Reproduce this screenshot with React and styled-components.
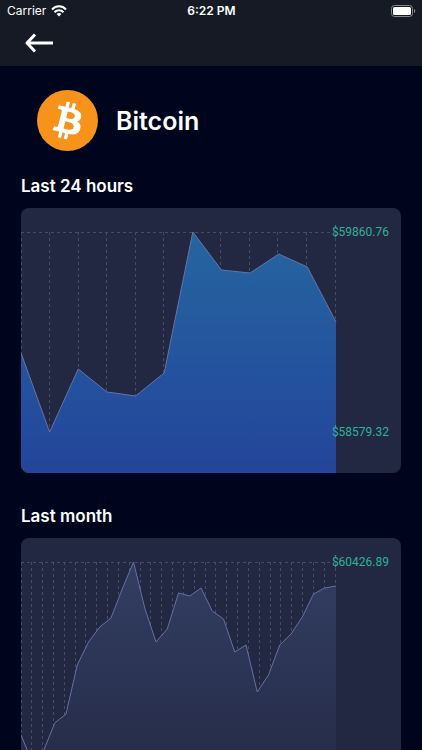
import styled, { createGlobalStyle } from 'styled-components'

const GlobalS = createGlobalStyle`
    * {
        box-sizing: border-box;
    }
    html {
        scrollbar-width: none;
    }
    body {
        margin: 0;
        background: #00051e;
        color: #ffffff;
        font-family: Inter, "Liberation Sans", sans-serif;
    }
`
const HeaderS = styled.header`
    height: 66px;
    background: #161a25;
`
const StatusBarS = styled.div`
    display: grid;
    grid-template-columns: 1fr auto 1fr;
    align-items: center;
    height: 22px;
    padding: 0 6px 0 7px;
    font-size: 12px;
    line-height: 22px;
`
const CarrierS = styled.div`
    display: flex;
    align-items: center;
    gap: 5px;
`
const TimeS = styled.time`
    font-weight: 600;
`
const BatteryS = styled.svg`
    justify-self: end;
`
const BackS = styled.button`
    display: flex;
    align-items: center;
    height: 42px;
    margin-left: 24px;
    padding: 0;
    border: 0;
    background: none;
    color: #ffffff;
    cursor: pointer;
`
const MainS = styled.main`
    padding: 24px 21px;
`
const CoinS = styled.div`
    display: flex;
    align-items: center;
    gap: 18px;
    padding-left: 16px;
`
const TitleS = styled.h1`
    margin: 0;
    font-size: 25px;
    font-weight: 600;
    line-height: 32px;
`
const SectionS = styled.section`
    margin-bottom: 31px;
`
const SubtitleS = styled.h2`
    margin: 0;
    padding: 25px 0 12px;
    font-size: 17px;
    font-weight: 600;
    line-height: 20px;

    ${SectionS} + ${SectionS} & {
        padding-top: 2px;
    }
`
const CardS = styled.div`
    overflow: hidden;
    border-radius: 8px;
    background: #222841;
`
const ChartS = styled.svg`
    display: block;
    width: 100%;
    height: auto;
`
const PriceS = styled.text`
    fill: #2fb29a;
    font-family: Roboto, "Liberation Sans", sans-serif;
    font-size: 12px;
    text-anchor: end;
`

const WIDTH = 380
const HEIGHT = 265
const PLOT = 315
const TOP = 24
const BOTTOM = 224

// heights of every sample, measured from the top of the chart
const day = [145, 224, 161, 184, 188, 165, 24, 62, 65, 46, 59, 114]
const month = [
    197, 224, 213, 185, 176, 127, 104, 89, 80, 51, 24, 70, 104, 91, 55,
    58, 50, 73, 81, 114, 107, 154, 137, 107, 96, 79, 56, 50, 48
]

const Chart = ({ id, label, points, columns, from, to, stroke, high, low }) => {
    const step = PLOT / (points.length - 1)
    const line = points.map( (y, i) => `${ i * step },${ y }` ).join(' ')
    const lines = Array.from({ length: columns + 1 }, (_, i) => Math.floor(i * (PLOT - 1) / columns) )

    return(
        <CardS>
            <ChartS viewBox={ `0 0 ${ WIDTH } ${ HEIGHT }` } role='img' aria-label={ label }>
                <defs>
                    <linearGradient id={ id } gradientUnits='userSpaceOnUse' x1='0' y1={ TOP } x2='0' y2={ HEIGHT }>
                        <stop offset='0' stopColor={ from } />
                        <stop offset='1' stopColor={ to } />
                    </linearGradient>
                </defs>
                <g stroke='#454c67' strokeWidth='1' strokeDasharray='3 3'>
                    <path d={ `M0 ${ TOP + 0.5 }H${ PLOT }` } />
                    {
                        lines.map( x =>
                            <path key={ x } d={ `M${ x + 0.5 } ${ TOP }V${ HEIGHT }` } />
                        )
                    }
                </g>
                <polygon points={ `0,${ HEIGHT } ${ line } ${ PLOT },${ HEIGHT }` } fill={ `url(#${ id })` } />
                <polyline points={ line } fill='none' stroke={ stroke } strokeWidth='1' />
                <PriceS x='368' y={ TOP + 4 }>{ high }</PriceS>
                { low && <PriceS x='368' y={ BOTTOM + 4 }>{ low }</PriceS> }
            </ChartS>
        </CardS>
    )
}

const Wifi = () => (
    <svg width='16' height='12' viewBox='0 0 16 12' fill='none' stroke='#ffffff' strokeWidth='2' aria-hidden='true'>
        <path d='M1 4.5C5 .3 11 .3 15 4.5' />
        <path d='M3.5 7.2C6 4.7 10 4.7 12.5 7.2' />
        <path d='M8 11.5L5.6 9C6.9 7.8 9.1 7.8 10.4 9Z' fill='#ffffff' stroke='none' />
    </svg>
)

const Battery = () => (
    <BatteryS width='25' height='12' viewBox='0 0 25 12' aria-hidden='true'>
        <rect x='.5' y='.5' width='21' height='11' rx='3' fill='none' stroke='#85878d' />
        <rect x='2' y='2' width='18' height='8' rx='1.5' fill='#ffffff' />
        <path d='M23 4v4c1.8-.8 1.8-3.2 0-4z' fill='#85878d' />
    </BatteryS>
)

const Bitcoin = () => (
    <svg width='61' height='61' viewBox='0 0 32 32' aria-hidden='true'>
        <circle cx='16' cy='16' r='16' fill='#f7931a' />
        <path
            fill='#ffffff'
            d='M23.189 14.02c.314-2.096-1.283-3.223-3.465-3.975l.708-2.84-1.728-.43-.69 2.765c-.454-.114-.92-.22-1.385-.326l.695-2.783L15.596 6l-.708 2.839c-.376-.086-.746-.17-1.104-.26l.002-.009-2.384-.595-.46 1.846s1.283.294 1.256.312c.7.175.826.638.805 1.006l-.806 3.235c.048.012.11.03.18.057l-.183-.045-1.13 4.532c-.086.212-.303.531-.793.41.018.025-1.256-.313-1.256-.313l-.858 1.978 2.25.561c.418.105.828.215 1.231.318l-.715 2.872 1.727.43.708-2.84c.472.127.93.245 1.378.357l-.706 2.828 1.728.43.715-2.866c2.948.558 5.164.333 6.097-2.333.752-2.146-.037-3.385-1.588-4.192 1.13-.26 1.98-1.003 2.207-2.538zm-3.95 5.538c-.533 2.147-4.148.986-5.32.695l.95-3.805c1.172.293 4.929.872 4.37 3.11zm.535-5.569c-.487 1.953-3.495.96-4.47.717l.86-3.45c.975.243 4.118.696 3.61 2.733z'
        />
    </svg>
)

const App = () => {
    return(
        <>
            <GlobalS />
            <HeaderS>
                <StatusBarS>
                    <CarrierS>
                        <span>Carrier</span>
                        <Wifi />
                    </CarrierS>
                    <TimeS>6:22 PM</TimeS>
                    <Battery />
                </StatusBarS>
                <BackS type='button' aria-label='Back'>
                    <svg width='30' height='20' viewBox='0 0 30 20' fill='none' stroke='currentColor' strokeWidth='3' strokeLinejoin='round'>
                        <path d='M29 10H3M11 1.5L3 10l8 8.5' />
                    </svg>
                </BackS>
            </HeaderS>
            <MainS>
                <CoinS>
                    <Bitcoin />
                    <TitleS>Bitcoin</TitleS>
                </CoinS>
                <SectionS>
                    <SubtitleS>Last 24 hours</SubtitleS>
                    <Chart
                        id='day'
                        label='Price over the last 24 hours'
                        points={ day }
                        columns={ 11 }
                        from='#2565a0'
                        to='#23459b'
                        stroke='#6674a6'
                        high='$59860.76'
                        low='$58579.32'
                    />
                </SectionS>
                <SectionS>
                    <SubtitleS>Last month</SubtitleS>
                    <Chart
                        id='month'
                        label='Price over the last month'
                        points={ month }
                        columns={ 29 }
                        from='#333e62'
                        to='#232944'
                        stroke='#6472a2'
                        high='$60426.89'
                    />
                </SectionS>
            </MainS>
        </>
    )
}
export default App
